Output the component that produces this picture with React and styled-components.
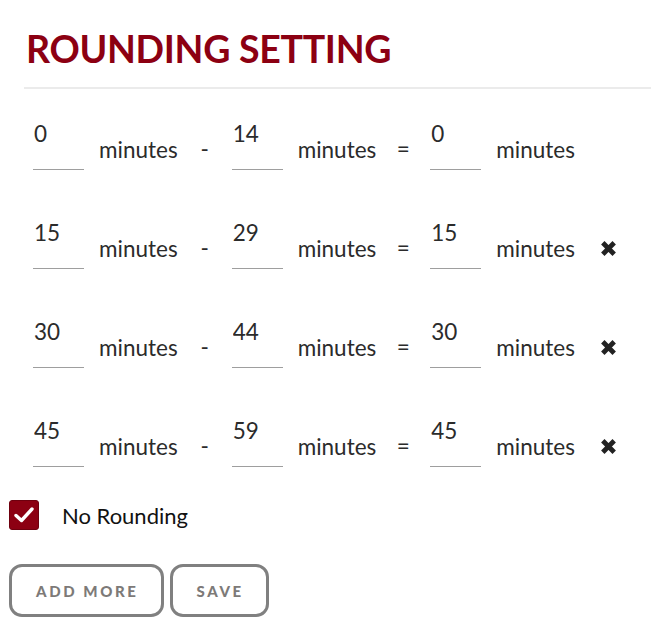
import React, { useState } from "react";
import styled, { createGlobalStyle } from "styled-components";

const GlobalStyle = createGlobalStyle`
  * { box-sizing: border-box; }
  body {
    margin: 0;
    background: #fff;
    font-family: Lato, "Open Sans", Arial, sans-serif;
    color: #333;
  }
`;

const Page = styled.div`
  padding: 27px 0 0 9px;
  width: 651px;
  overflow: hidden;
`;

const Header = styled.div`
  margin-left: 15px;
  border-bottom: 2px solid #ebebeb;
  padding-bottom: 16px;
  margin-right: -10px;
`;

const Title = styled.h1`
  margin: 0 0 0 2px;
  font-size: 37.5px;
  line-height: 44px;
  font-weight: 700;
  color: #8c0012;
  letter-spacing: -0.3px;
`;

const Rows = styled.div`
  padding: 7px 0 0 24px;
`;

const Row = styled.div`
  display: flex;
  align-items: center;
  gap: 15px;
  height: 99px;
`;

const NumInput = styled.input`
  width: 51px;
  height: 49px;
  border: 0;
  border-bottom: 1px solid #9e9e9e;
  padding: 0 0 24px 1px;
  font-family: inherit;
  font-size: 22.5px;
  color: #2b2b2b;
  outline: none;
  background: transparent;
`;

const Label = styled.span`
  font-size: 22.5px;
  line-height: 26px;
  margin-top: 8px;
  color: #2b2b2b;
`;

const Sep = styled.span`
  width: 24px;
  text-align: center;
  font-size: 22.5px;
  line-height: 26px;
  margin-top: 6px;
  color: #2b2b2b;
`;

const Remove = styled.button`
  border: 0;
  background: none;
  padding: 0;
  margin: 8px 0 0 10px;
  width: 17px;
  height: 17px;
  cursor: pointer;
  display: flex;
`;

const CheckRow = styled.label`
  display: flex;
  align-items: center;
  gap: 23px;
  margin-top: 8px;
  font-size: 22px;
  color: #111;
  cursor: pointer;
`;

const Box = styled.span`
  width: 30px;
  height: 30px;
  border-radius: 3px;
  background: ${({ $on }) => ($on ? "#8c0012" : "#fff")};
  border: 1px solid ${({ $on }) => ($on ? "#6e000e" : "#999")};
  display: flex;
  align-items: center;
  justify-content: center;
`;

const Buttons = styled.div`
  display: flex;
  gap: 6px;
  margin-top: 34px;
`;

const Button = styled.button`
  height: 53px;
  padding: 0 22px 0 24px;
  border: 3px solid #808080;
  border-radius: 13px;
  background: #fff;
  font-family: inherit;
  font-size: 15px;
  font-weight: 900;
  letter-spacing: 2.6px;
  color: #7d7a78;
  cursor: pointer;
`;

const Cross = () => (
  <svg width="17" height="17" viewBox="0 0 17 17">
    <path d="M2.8 2.8 L14.2 14.2 M14.2 2.8 L2.8 14.2" stroke="#222" strokeWidth="4.8" />
  </svg>
);

const initial = [
  [0, 14, 0],
  [15, 29, 15],
  [30, 44, 30],
  [45, 59, 45],
];

export default function App() {
  const [rows, setRows] = useState(initial);
  const [none, setNone] = useState(true);

  return (
    <Page>
      <GlobalStyle />
      <Header>
        <Title>ROUNDING SETTING</Title>
      </Header>
      <Rows>
        {rows.map((r, i) => (
          <Row key={i}>
            <NumInput defaultValue={r[0]} />
            <Label>minutes</Label>
            <Sep>-</Sep>
            <NumInput defaultValue={r[1]} />
            <Label>minutes</Label>
            <Sep>=</Sep>
            <NumInput defaultValue={r[2]} />
            <Label>minutes</Label>
            {i > 0 && (
              <Remove onClick={() => setRows(rows.filter((_, j) => j !== i))}>
                <Cross />
              </Remove>
            )}
          </Row>
        ))}
      </Rows>
      <CheckRow onClick={() => setNone(!none)}>
        <Box $on={none}>
          {none && (
            <svg width="22" height="18" viewBox="0 0 22 18">
              <path d="M3 9.5 L8.5 14.5 L19 3" fill="none" stroke="#fff" strokeWidth="3.4" strokeLinecap="round" strokeLinejoin="round" />
            </svg>
          )}
        </Box>
        No Rounding
      </CheckRow>
      <Buttons>
        <Button onClick={() => setRows([...rows, [0, 0, 0]])}>ADD MORE</Button>
        <Button>SAVE</Button>
      </Buttons>
    </Page>
  );
}
